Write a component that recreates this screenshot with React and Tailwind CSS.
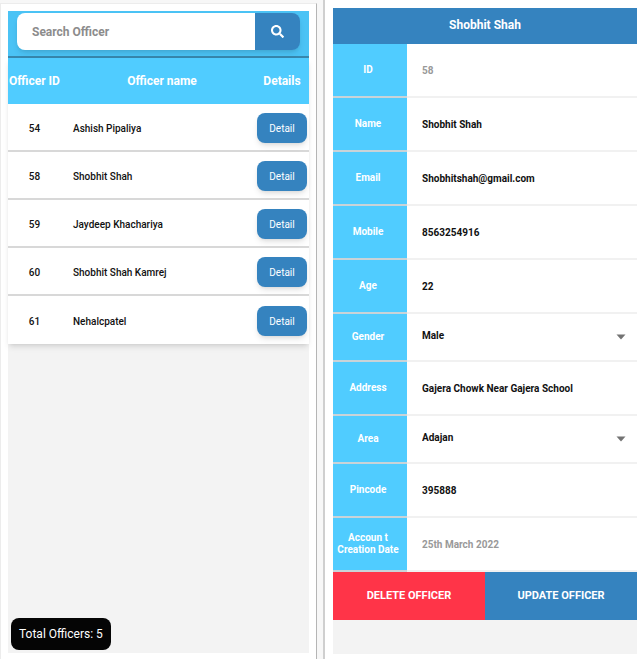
import { FaSearch } from "react-icons/fa";

const officers = [
  { id: 54, name: "Ashish Pipaliya" },
  { id: 58, name: "Shobhit Shah" },
  { id: 59, name: "Jaydeep Khachariya" },
  { id: 60, name: "Shobhit Shah Kamrej" },
  { id: 61, name: "Nehalcpatel" },
];

const fields = [
  { key: "id", label: "ID", value: "58", locked: true },
  { key: "name", label: "Name", value: "Shobhit Shah" },
  { key: "email", label: "Email", value: "Shobhitshah@gmail.com" },
  { key: "mobile", label: "Mobile", value: "8563254916" },
  { key: "age", label: "Age", value: "22" },
  { key: "gender", label: "Gender", value: "Male", options: ["Male", "Female"] },
  { key: "address", label: "Address", value: "Gajera Chowk Near Gajera School" },
  { key: "area", label: "Area", value: "Adajan", options: ["Adajan", "Kamrej"] },
  { key: "pincode", label: "Pincode", value: "395888" },
  { key: "created", label: "Accoun t Creation Date", value: "25th March 2022", locked: true },
];

function OfficerList() {
  return (
    <section className="mt-[3px] flex min-w-0 flex-col border border-b-0 border-[#ececec] border-r-[#b5b5b5] bg-white px-[7px] pt-[7px] pb-[6px]">
      <div className="flex flex-1 flex-col bg-[#f3f3f3]">
        <form
          className="border-b-2 border-[#3787ad] bg-[#4bc3f5] px-[9px] pt-[2px] pb-[6px]"
          onSubmit={(e) => e.preventDefault()}
        >
          <div className="flex h-[37px] overflow-hidden rounded-lg shadow-md">
            <input
              type="text"
              aria-label="Search Officer"
              placeholder="Search Officer"
              className="min-w-0 flex-1 bg-white px-[15px] text-[12px] font-bold placeholder:text-[#8c8c8c] outline-none"
            />
            <button
              type="submit"
              aria-label="Search"
              className="flex w-[45px] items-center justify-center bg-[#3583bf] text-white"
            >
              <FaSearch size={13} />
            </button>
          </div>
        </form>

        <table className="w-full table-fixed border-separate border-spacing-0 shadow-md">
          <thead>
            <tr className="h-[46px] bg-[#50ccff] text-[12px] text-white">
              <th scope="col" className="w-[53px] p-0 font-bold whitespace-nowrap">Officer ID</th>
              <th scope="col" className="p-0 pl-2 font-bold">Officer name</th>
              <th scope="col" className="w-[54px] p-0 font-bold">Details</th>
            </tr>
          </thead>
          <tbody className="[&>tr:not(:last-child)>td]:border-b-2 [&>tr:not(:last-child)>td]:border-[#d8d8d8]">
            {officers.map((o) => (
              <tr
                key={o.id}
                className="h-[48px] bg-white text-[10px] font-medium text-[#111111]"
              >
                <td className="p-0 pt-[2px] text-center">{o.id}</td>
                <td className="p-0 pt-[2px] pl-3">{o.name}</td>
                <td className="p-0 px-[2px] pt-[2px]">
                  <button
                    type="button"
                    className="block h-[30px] w-full rounded-lg bg-[#3583bf] text-[10px] font-normal text-white shadow-md"
                  >
                    Detail
                  </button>
                </td>
              </tr>
            ))}
          </tbody>
        </table>

        <p className="mt-auto mb-[3px] ml-[3px] flex h-8 items-center self-start rounded-lg bg-[#050505] px-2 text-[12px] text-white">
          Total Officers: 5
        </p>
      </div>
    </section>
  );
}

function FieldRow({ field }) {
  const inputId = `officer-${field.key}`;
  const text = field.locked ? "text-[#999999]" : "text-[#111111]";
  return (
    <div className={`flex ${field.options ? "h-12" : "h-[54px]"}`}>
      <label
        htmlFor={inputId}
        className="flex w-[74px] shrink-0 items-center justify-center border-b-2 border-[#c9d3d8] bg-[#50ccff] pr-1 text-center text-[10px] leading-[12px] font-bold text-white"
      >
        {field.label}
      </label>
      <div className="flex min-w-0 flex-1 items-center border-b-2 border-[#f1f1f1] bg-white">
        {field.options ? (
          <div className="relative h-full w-full">
            <select
              id={inputId}
              defaultValue={field.value}
              className="h-full w-full appearance-none bg-transparent pb-1 pl-[15px] text-[10px] font-bold text-[#111111] outline-none"
            >
              {field.options.map((o) => (
                <option key={o}>{o}</option>
              ))}
            </select>
            <svg
              viewBox="0 0 10 6"
              className="pointer-events-none absolute top-1/2 right-[11px] h-[6px] w-[10px] -translate-y-1/2 text-[#737373]"
              aria-hidden="true"
            >
              <path d="M0.5 0.5h9L5 5.5z" fill="currentColor" />
            </svg>
          </div>
        ) : (
          <input
            id={inputId}
            type="text"
            defaultValue={field.value}
            readOnly={field.locked}
            className={`h-full w-full bg-transparent px-[15px] text-[10px] font-bold outline-none ${text}`}
          />
        )}
      </div>
    </div>
  );
}

function OfficerDetail() {
  return (
    <section className="flex min-w-0 flex-col border-l-2 border-[#cfcfcf] bg-white pt-2 pr-[3px] pb-[5px] pl-2">
      <form className="flex flex-1 flex-col bg-[#f3f3f3]" onSubmit={(e) => e.preventDefault()}>
        <h1 className="flex h-9 items-center justify-center bg-[#3583bf] pb-[3px] text-[12px] font-bold text-white">
          Shobhit Shah
        </h1>
        {fields.map((f) => (
          <FieldRow key={f.key} field={f} />
        ))}
        <div className="grid h-12 grid-cols-2 text-[11px] font-bold text-white">
          <button type="button" className="bg-[#ff3448]">DELETE OFFICER</button>
          <button type="submit" className="bg-[#3583bf]">UPDATE OFFICER</button>
        </div>
      </form>
    </section>
  );
}

export default function App() {
  return (
    <main className="grid min-h-screen grid-cols-2 gap-[6px] bg-[#f7f7f7] font-[Roboto,sans-serif]">
      <OfficerList />
      <OfficerDetail />
    </main>
  );
}
